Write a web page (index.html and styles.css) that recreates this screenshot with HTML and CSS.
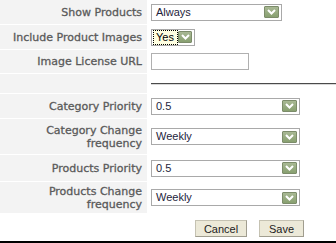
FILE: index.html
```html
<!DOCTYPE html>
<html>
<head>
<meta charset="utf-8">
<link rel="stylesheet" href="styles.css">
</head>
<body>
<div class="page">
  <div class="form">
    <div class="label">Show Products</div>
    <div class="value">
      <div class="select w131"><span class="txt">Always</span><span class="arrow"><svg width="9" height="6" viewBox="0 0 9 6"><path d="M1 1 L4.5 4.5 L8 1" fill="none" stroke="#fff" stroke-width="2"/></svg></span></div>
    </div>

    <div class="label">Include Product Images</div>
    <div class="value">
      <div class="select small"><span class="txt focus">Yes</span><span class="arrow"><svg width="9" height="6" viewBox="0 0 9 6"><path d="M1 1 L4.5 4.5 L8 1" fill="none" stroke="#fff" stroke-width="2"/></svg></span></div>
    </div>

    <div class="label">Image License URL</div>
    <div class="value">
      <input class="input" type="text">
    </div>

    <div class="label"></div>
    <div class="value sep"><div class="rule"></div></div>

    <div class="label">Category Priority</div>
    <div class="value">
      <div class="select w149"><span class="txt">0.5</span><span class="arrow"><svg width="9" height="6" viewBox="0 0 9 6"><path d="M1 1 L4.5 4.5 L8 1" fill="none" stroke="#fff" stroke-width="2"/></svg></span></div>
    </div>

    <div class="label">Category Change frequency</div>
    <div class="value">
      <div class="select w149"><span class="txt">Weekly</span><span class="arrow"><svg width="9" height="6" viewBox="0 0 9 6"><path d="M1 1 L4.5 4.5 L8 1" fill="none" stroke="#fff" stroke-width="2"/></svg></span></div>
    </div>

    <div class="label">Products Priority</div>
    <div class="value">
      <div class="select w149"><span class="txt">0.5</span><span class="arrow"><svg width="9" height="6" viewBox="0 0 9 6"><path d="M1 1 L4.5 4.5 L8 1" fill="none" stroke="#fff" stroke-width="2"/></svg></span></div>
    </div>

    <div class="label">Products Change frequency</div>
    <div class="value">
      <div class="select w149"><span class="txt">Weekly</span><span class="arrow"><svg width="9" height="6" viewBox="0 0 9 6"><path d="M1 1 L4.5 4.5 L8 1" fill="none" stroke="#fff" stroke-width="2"/></svg></span></div>
    </div>
  </div>

  <div class="buttons">
    <button class="btn cancel">Cancel</button>
    <button class="btn save">Save</button>
  </div>
  <div class="bottom"></div>
</div>
</body>
</html>
```

FILE: styles.css
```css
html, body {
  margin: 0;
  padding: 0;
  background: #fff;
}
body {
  font-family: "Liberation Sans", Arial, sans-serif;
  font-size: 11px;
  width: 336px;
  height: 243px;
  overflow: hidden;
}
.page {
  display: flex;
  flex-direction: column;
}
.form {
  display: grid;
  grid-template-columns: 147px 1fr;
  grid-template-rows: 24px 24px 23px 19px 24px 35px 26px 31px;
  row-gap: 1px;
}
.label {
  background: #f3f3f3;
  color: #5a5a5a;
  font-family: "DejaVu Sans", Verdana, sans-serif;
  font-size: 11px;
  -webkit-text-stroke: 0.3px #5a5a5a;
  text-align: right;
  line-height: 13px;
  padding: 0 5px 0 8px;
  display: flex;
  align-items: center;
  justify-content: flex-end;
}
.value {
  display: flex;
  align-items: center;
  padding-left: 4px;
}
.value.sep {
  align-items: flex-start;
}
.rule {
  margin-top: 9px;
  height: 1px;
  flex: 1;
  background: #4a4a4a;
  border-bottom: 1px solid #d8d8d8;
}
.select {
  box-sizing: border-box;
  height: 17px;
  border: 1px solid #a9a9a9;
  background: #fff;
  display: flex;
  align-items: center;
  justify-content: space-between;
  padding-right: 2px;
}
.w131 { width: 131px; }
.w149 { width: 149px; }
.select.small {
  width: 44px;
  padding-left: 1px;
}
.txt {
  color: #1e1e3c;
  padding-left: 4px;
  font-size: 11px;
  line-height: 13px;
}
.txt.focus {
  box-sizing: border-box;
  width: 27px;
  height: 15px;
  padding-left: 2px;
  background: #ffffe1;
  border: 1px dotted #000;
  line-height: 13px;
  color: #000;
}
.arrow {
  box-sizing: border-box;
  width: 15px;
  height: 12px;
  border: 1px solid #7c8c6a;
  border-radius: 1px;
  background: linear-gradient(#a8b894, #88a070);
  display: flex;
  align-items: center;
  justify-content: center;
}
.arrow svg { display: block; }
.input {
  box-sizing: border-box;
  width: 98px;
  height: 17px;
  border: 1px solid #b0b0b0;
  margin: 0;
  padding: 0;
  background: #fff;
}
.buttons {
  display: flex;
  justify-content: flex-end;
  gap: 12px;
  padding-right: 32px;
  margin-top: 7px;
}
.btn {
  box-sizing: border-box;
  height: 17px;
  margin: 0;
  padding: 0;
  font-family: "Liberation Sans", Arial, sans-serif;
  font-size: 11px;
  color: #222;
  background: #ece9d8;
  border: 1px solid #c5c2b2;
  border-right-color: #a09d8f;
  border-bottom-color: #a09d8f;
}
.cancel { width: 52px; }
.save { width: 45px; }
.bottom {
  margin-top: 4px;
  height: 2px;
  background: #000;
}
```
